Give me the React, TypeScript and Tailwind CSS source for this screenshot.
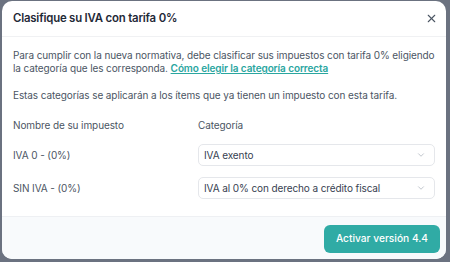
import React from 'react';
import { X, ChevronDown } from 'lucide-react';

const rows = [
  { name: 'IVA 0 - (0%)', category: 'IVA exento' },
  { name: 'SIN IVA - (0%)', category: 'IVA al 0% con derecho a crédito fiscal' },
];

const App: React.FC = () => {
  return (
    <div className="w-[450px] h-[262px] bg-[#6b7280] pl-[2px] pr-[4px] pt-[1px] pb-[3px] overflow-hidden" style={{ fontFamily: 'Inter, "Noto Sans", sans-serif' }}>
      <div className="h-full bg-white rounded-[10px] overflow-hidden flex flex-col">
        {/* Header */}
        <div className="h-[36px] shrink-0 flex items-center justify-between pl-[11px] pr-[8px] border-b border-[#f0f1f3]">
          <h2 className="text-[11.4px] font-semibold text-[#1f2937] tracking-[-0.2px]">Clasifique su IVA con tarifa 0%</h2>
          <X className="w-[13px] h-[13px] text-[#4b5563]" strokeWidth={2} />
        </div>

        {/* Body */}
        <div className="flex-1 px-[11px] pt-[12px] text-[10px] tracking-[-0.1px] text-[#4b5563]">
          <p className="leading-[13px]">
            Para cumplir con la nueva normativa, debe clasificar sus impuestos con tarifa 0% eligiendo la categoría que les corresponda.{' '}
            <a className="text-[#2aa69f] font-semibold underline underline-offset-1">Cómo elegir la categoría correcta</a>
          </p>
          <p className="mt-[14px] leading-[13px]">Estas categorías se aplicarán a los ítems que ya tienen un impuesto con esta tarifa.</p>

          <div className="mt-[17px] grid grid-cols-[185px_1fr] items-center">
            <div className="leading-[13px]">Nombre de su impuesto</div>
            <div className="leading-[13px]">Categoría</div>
          </div>

          <div className="mt-[12px] flex flex-col gap-[11px]">
            {rows.map((r) => (
              <div key={r.name} className="grid grid-cols-[185px_1fr] items-center">
                <div>{r.name}</div>
                <div className="h-[22px] border border-[#e5e7eb] rounded-[5px] flex items-center justify-between pl-[5px] pr-[8px] text-[#374151]">
                  <span>{r.category}</span>
                  <ChevronDown className="w-[10px] h-[10px] text-[#9ca3af]" strokeWidth={1.5} />
                </div>
              </div>
            ))}
          </div>
        </div>

        {/* Footer */}
        <div className="h-[43px] shrink-0 bg-[#f8fafc] border-t border-[#eef0f3] flex items-center justify-end pr-[6px] pt-[2px]">
          <button className="h-[28px] w-[116px] rounded-[6px] bg-[#30aba5] text-white text-[10.2px] font-medium">Activar versión 4.4</button>
        </div>
      </div>
    </div>
  );
};

export default App;
